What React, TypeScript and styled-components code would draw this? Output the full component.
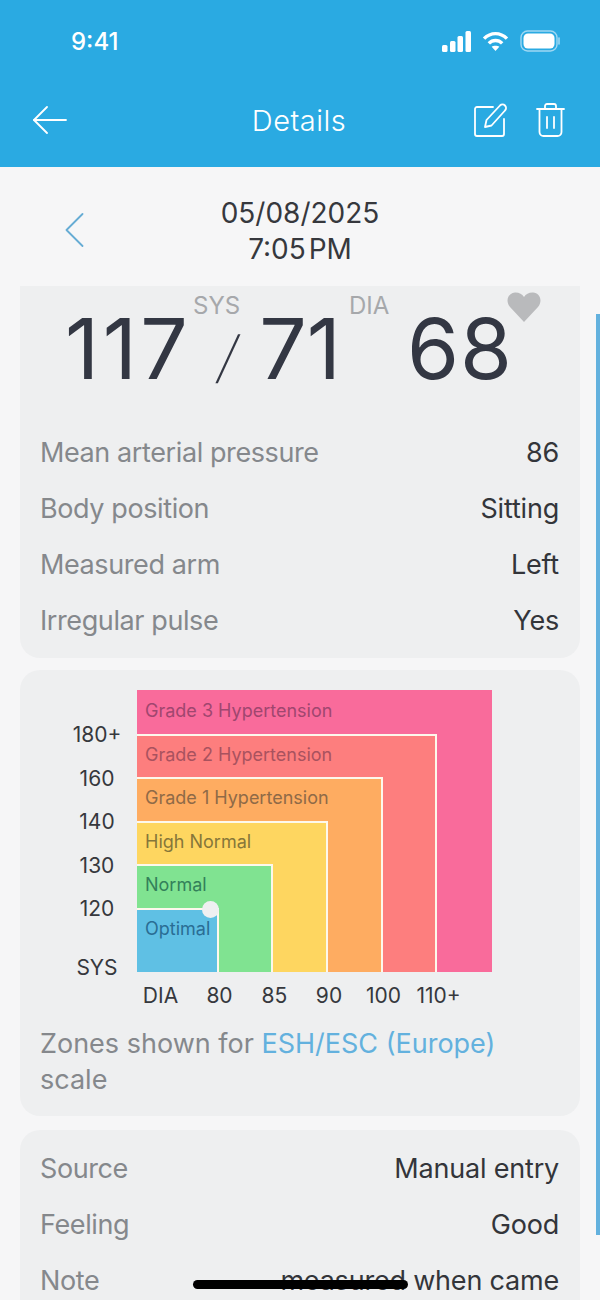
import styled, { createGlobalStyle } from 'styled-components'

const GlobalStyle = createGlobalStyle`
    html, body {
        margin: 0;
        padding: 0;
        background-color: #f6f6f7;
    }
    body {
        font-family: Inter, "Liberation Sans", sans-serif;
    }
`

const Screen = styled.div`
    position: relative;
    width: 600px;
    height: 1300px;
    overflow: hidden;
    background-color: #f6f6f7;
`

const Header = styled.header`
    height: 167px;
    background-color: #2aaae2;
    color: #fff;
    box-sizing: border-box;
    padding: 0 35px 0 33px;
    display: flex;
    flex-direction: column;
`

const StatusBar = styled.div`
    height: 82px;
    display: flex;
    align-items: center;
    justify-content: space-between;
    padding: 0 5px 0 38px;
`

const Clock = styled.span`
    font-size: 24px;
    font-weight: 500;
`

const StatusIcons = styled.div`
    display: flex;
    align-items: center;
    gap: 11px;
`

const NavBar = styled.nav`
    display: flex;
    align-items: center;
    justify-content: space-between;
    height: 76px;
`

const NavTitle = styled.h1`
    margin: 0;
    font-size: 29px;
    font-weight: 300;
    letter-spacing: 0.5px;
`

const NavActions = styled.div`
    display: flex;
    gap: 29px;
    width: 91px;
    justify-content: flex-end;
`

const NavSide = styled.div`
    width: 91px;
    display: flex;
    justify-content: flex-start;
`

const DateBar = styled.div`
    height: 119px;
    box-sizing: border-box;
    padding: 28px 0 0 65px;
    display: grid;
    grid-template-columns: 20px 1fr 85px;
    align-items: start;
`

const DateText = styled.div`
    text-align: center;
    font-size: 28px;
    line-height: 36px;
    word-spacing: -5px;
    color: #36383d;
`

const ChevronWrap = styled.div`
    padding-top: 18px;
`

const Content = styled.main`
    display: flex;
    flex-direction: column;
    padding: 0 20px;
`

const Card = styled.section`
    background-color: #eeeff0;
    border-radius: 20px;
    padding: 0 20px;
`

const TopCard = styled(Card)`
    border-radius: 0 0 20px 20px;
    padding-bottom: 10px;
`

const Readings = styled.div`
    position: relative;
    height: 118px;
    display: flex;
    align-items: flex-start;
    color: #333743;
    font-size: 84px;
    line-height: 126px;
    font-weight: 400;
`

const BigNumber = styled.span<{ $left: number; $spacing?: number }>`
    margin-left: ${({ $left }) => $left}px;
    letter-spacing: ${({ $spacing }) => $spacing ?? 0}px;
`

const Slash = styled.span`
    font-size: 56px;
    line-height: 118px;
    font-weight: 200;
    margin-left: 28px;
    margin-top: 12px;
    color: #333743;
    transform: skewX(-11deg);
`

const SmallTag = styled.span<{ $left: number }>`
    position: absolute;
    top: 6px;
    left: ${({ $left }) => $left}px;
    font-size: 24px;
    line-height: 28px;
    color: #a6a8ab;
`

const HeartWrap = styled.div`
    position: absolute;
    top: 6px;
    left: 467px;
    line-height: 0;
`

const Rows = styled.div<{ $top: number }>`
    padding-top: ${({ $top }) => $top}px;
`

const Row = styled.div`
    display: flex;
    justify-content: space-between;
    height: 56px;
    align-items: center;
    font-size: 27px;
    white-space: nowrap;
`

const RowLabel = styled.span`
    color: #85888c;
    letter-spacing: -0.4px;
`

const RowValue = styled.span`
    color: #33353a;
    letter-spacing: -0.2px;
    padding-right: 1px;
`

const ChartCard = styled(Card)`
    margin-top: 12px;
    height: 446px;
    box-sizing: border-box;
    padding-top: 20px;
`

const Chart = styled.div`
    display: grid;
    grid-template-columns: 97px 355px;
    grid-template-rows: 282px 42px;
`

const YAxis = styled.div`
    display: flex;
    flex-direction: column;
    align-items: center;
    width: 82px;
    margin-left: 16px;
    padding-top: 27px;
`

const YTick = styled.span<{ $height: number }>`
    height: ${({ $height }) => $height}px;
    line-height: 36px;
    font-size: 21px;
    color: #36383d;
    flex: none;
`

const Zone = styled.div<{ $w: number; $h: number; $color: string; $text: string; $outer?: boolean }>`
    position: relative;
    box-sizing: border-box;
    width: ${({ $w }) => $w}px;
    height: ${({ $h }) => $h}px;
    flex: none;
    background-color: ${({ $color }) => $color};
    color: ${({ $text }) => $text};
    border-top: ${({ $outer }) => ($outer ? 'none' : '2px solid #fdf8ec')};
    border-right: ${({ $outer }) => ($outer ? 'none' : '2px solid #fdf8ec')};
    display: flex;
    flex-direction: column;
    justify-content: space-between;
    font-size: 18px;
`

const ZoneLabel = styled.span<{ $outer?: boolean }>`
    padding-left: 8px;
    line-height: 24px;
    margin-top: ${({ $outer }) => ($outer ? 9 : 7)}px;
    white-space: nowrap;
`

const Dot = styled.span`
    position: absolute;
    top: -9px;
    right: -2px;
    width: 17px;
    height: 17px;
    border-radius: 50%;
    background-color: #eff0f1;
`

const XAxis = styled.div`
    display: flex;
    padding-top: 12px;
    margin-left: -5px;
`

const XTick = styled.span<{ $width: number; $inset?: number }>`
    box-sizing: border-box;
    width: ${({ $width }) => $width}px;
    padding-right: ${({ $inset }) => $inset ?? 0}px;
    flex: none;
    text-align: center;
    font-size: 21px;
    line-height: 24px;
    color: #36383d;
`

const Caption = styled.p`
    margin: 0;
    padding-top: 12px;
    font-size: 27px;
    line-height: 36px;
    color: #85888c;
`

const CaptionLink = styled.span`
    color: #63b1de;
`

const LastCard = styled(Card)`
    margin-top: 14px;
    height: 300px;
`

const ScrollBar = styled.div`
    position: absolute;
    top: 314px;
    right: 0;
    width: 4px;
    height: 921px;
    background-color: #63b1de;
`

const HomeIndicator = styled.div`
    position: absolute;
    left: 193px;
    top: 1280px;
    width: 215px;
    height: 9px;
    border-radius: 5px;
    background-color: #000;
`

const zones = [
    { w: 355, h: 282, color: '#f96b9b', text: '#a0466f', label: 'Grade 3 Hypertension' },
    { w: 300, h: 238, color: '#fd7e7e', text: '#a9525e', label: 'Grade 2 Hypertension' },
    { w: 246, h: 195, color: '#feac61', text: '#8f6a47', label: 'Grade 1 Hypertension' },
    { w: 191, h: 151, color: '#fed660', text: '#86763a', label: 'High Normal' },
    { w: 136, h: 108, color: '#80e391', text: '#33805a', label: 'Normal' },
    { w: 82, h: 64, color: '#5fc0e4', text: '#2a6d94', label: 'Optimal' },
]

const yTicks = [
    { label: '180+', height: 44 },
    { label: '160', height: 43 },
    { label: '140', height: 44 },
    { label: '130', height: 43 },
    { label: '120', height: 59 },
    { label: 'SYS', height: 36 },
]

const xTicks = [
    { label: 'DIA', width: 60, inset: 3 },
    { label: '80', width: 55 },
    { label: '85', width: 55 },
    { label: '90', width: 54 },
    { label: '100', width: 55 },
    { label: '110+', width: 55 },
]

const renderZone = (index: number): React.ReactNode => {
    const zone = zones[index]
    if (!zone) return null
    return (
        <Zone $w={zone.w} $h={zone.h} $color={zone.color} $text={zone.text} $outer={index === 0}>
            <ZoneLabel $outer={index === 0}>{zone.label}</ZoneLabel>
            {renderZone(index + 1)}
            {index === zones.length - 1 && <Dot />}
        </Zone>
    )
}

const DetailRow = ({ label, value }: { label: string; value: string }) => (
    <Row>
        <RowLabel>{label}</RowLabel>
        <RowValue>{value}</RowValue>
    </Row>
)

export default function App() {
    return (
        <Screen>
            <GlobalStyle />
            <Header>
                <StatusBar>
                    <Clock>9:41</Clock>
                    <StatusIcons>
                        <svg width="29" height="21" viewBox="0 0 29 21" fill="#fff">
                            <rect x="0" y="14" width="5.5" height="7" rx="1.5" />
                            <rect x="8" y="10" width="5.5" height="11" rx="1.5" />
                            <rect x="15.5" y="5" width="5.5" height="16" rx="1.5" />
                            <rect x="23.5" y="0" width="5.5" height="21" rx="1.5" />
                        </svg>
                        <svg width="27" height="21" viewBox="0 0 28 22" fill="none" stroke="#fff" strokeWidth="3.6">
                            <path d="M2 8 C9 1 19 1 26 8" />
                            <path d="M7 13 C11 9 17 9 21 13" />
                            <path d="M14 21 L10 16.5 C12 15 16 15 18 16.5 Z" fill="#fff" stroke="none" />
                        </svg>
                        <svg width="40" height="22" viewBox="0 0 40 22" fill="none">
                            <rect x="1" y="1" width="36" height="20" rx="6.5" stroke="#9fd8f3" strokeWidth="1.4" />
                            <rect x="3.5" y="3.5" width="31" height="15" rx="4.5" fill="#fff" />
                            <path d="M39 8 V14" stroke="#9fd8f3" strokeWidth="1.6" strokeLinecap="round" />
                        </svg>
                    </StatusIcons>
                </StatusBar>
                <NavBar>
                    <NavSide>
                        <svg width="34" height="28" viewBox="0 0 34 28" fill="none" stroke="#fff" strokeWidth="1.8" strokeLinecap="round" strokeLinejoin="round">
                            <path d="M1 14 H33" />
                            <path d="M14 1 L1 14 L14 27" />
                        </svg>
                    </NavSide>
                    <NavTitle>Details</NavTitle>
                    <NavActions>
                        <svg width="33" height="34" viewBox="0 0 33 34" fill="none" stroke="#fff" strokeWidth="1.8" strokeLinecap="round" strokeLinejoin="round">
                            <path d="M19 4 H3 A2 2 0 0 0 1 6 V31 A2 2 0 0 0 3 33 H28 A2 2 0 0 0 30 31 V16" />
                            <path d="M11 24 L12.5 17 L26 2.5 A3 3 0 0 1 31 7.5 L17.5 22.5 Z" />
                        </svg>
                        <svg width="29" height="34" viewBox="0 0 29 34" fill="none" stroke="#fff" strokeWidth="1.8" strokeLinecap="round" strokeLinejoin="round">
                            <path d="M1 6 H28" />
                            <path d="M9 6 V3 A2 2 0 0 1 11 1 H18 A2 2 0 0 1 20 3 V6" />
                            <path d="M3.5 6 V29 A4 4 0 0 0 7.5 33 H21.5 A4 4 0 0 0 25.5 29 V6" />
                            <path d="M11 14 V25" />
                            <path d="M18 14 V25" />
                        </svg>
                    </NavActions>
                </NavBar>
            </Header>
            <DateBar>
                <ChevronWrap>
                    <svg width="19" height="34" viewBox="0 0 19 34" fill="none" stroke="#66acd4" strokeWidth="1.8" strokeLinecap="round" strokeLinejoin="round">
                        <path d="M17.5 1 L1.5 17 L17.5 33" />
                    </svg>
                </ChevronWrap>
                <DateText>
                    05/08/2025
                    <br />
                    7:05 PM
                </DateText>
            </DateBar>
            <Content>
                <TopCard>
                    <Readings>
                        <BigNumber $left={25} $spacing={3.5}>117</BigNumber>
                        <Slash>/</Slash>
                        <BigNumber $left={21}>71</BigNumber>
                        <BigNumber $left={66} $spacing={1}>68</BigNumber>
                        <SmallTag $left={153}>SYS</SmallTag>
                        <SmallTag $left={309}>DIA</SmallTag>
                        <HeartWrap>
                            <svg width="34" height="30" viewBox="0 0 34 30" fill="#b9babc">
                                <path d="M17 30 L3 15 C-2 9 1 1 8 0.5 C12 0.3 15 2 17 5 C19 2 22 0.3 26 0.5 C33 1 36 9 31 15 Z" />
                            </svg>
                        </HeartWrap>
                    </Readings>
                    <Rows $top={20}>
                        <DetailRow label="Mean arterial pressure" value="86" />
                        <DetailRow label="Body position" value="Sitting" />
                        <DetailRow label="Measured arm" value="Left" />
                        <DetailRow label="Irregular pulse" value="Yes" />
                    </Rows>
                </TopCard>
                <ChartCard>
                    <Chart>
                        <YAxis>
                            {yTicks.map((tick) => (
                                <YTick key={tick.label} $height={tick.height}>{tick.label}</YTick>
                            ))}
                        </YAxis>
                        {renderZone(0)}
                        <div />
                        <XAxis>
                            {xTicks.map((tick) => (
                                <XTick key={tick.label} $width={tick.width} $inset={tick.inset}>{tick.label}</XTick>
                            ))}
                        </XAxis>
                    </Chart>
                    <Caption>
                        Zones shown for <CaptionLink>ESH/ESC (Europe)</CaptionLink> scale
                    </Caption>
                </ChartCard>
                <LastCard>
                    <Rows $top={10}>
                        <DetailRow label="Source" value="Manual entry" />
                        <DetailRow label="Feeling" value="Good" />
                        <DetailRow label="Note" value="measured when came" />
                    </Rows>
                </LastCard>
            </Content>
            <ScrollBar />
            <HomeIndicator />
        </Screen>
    )
}
